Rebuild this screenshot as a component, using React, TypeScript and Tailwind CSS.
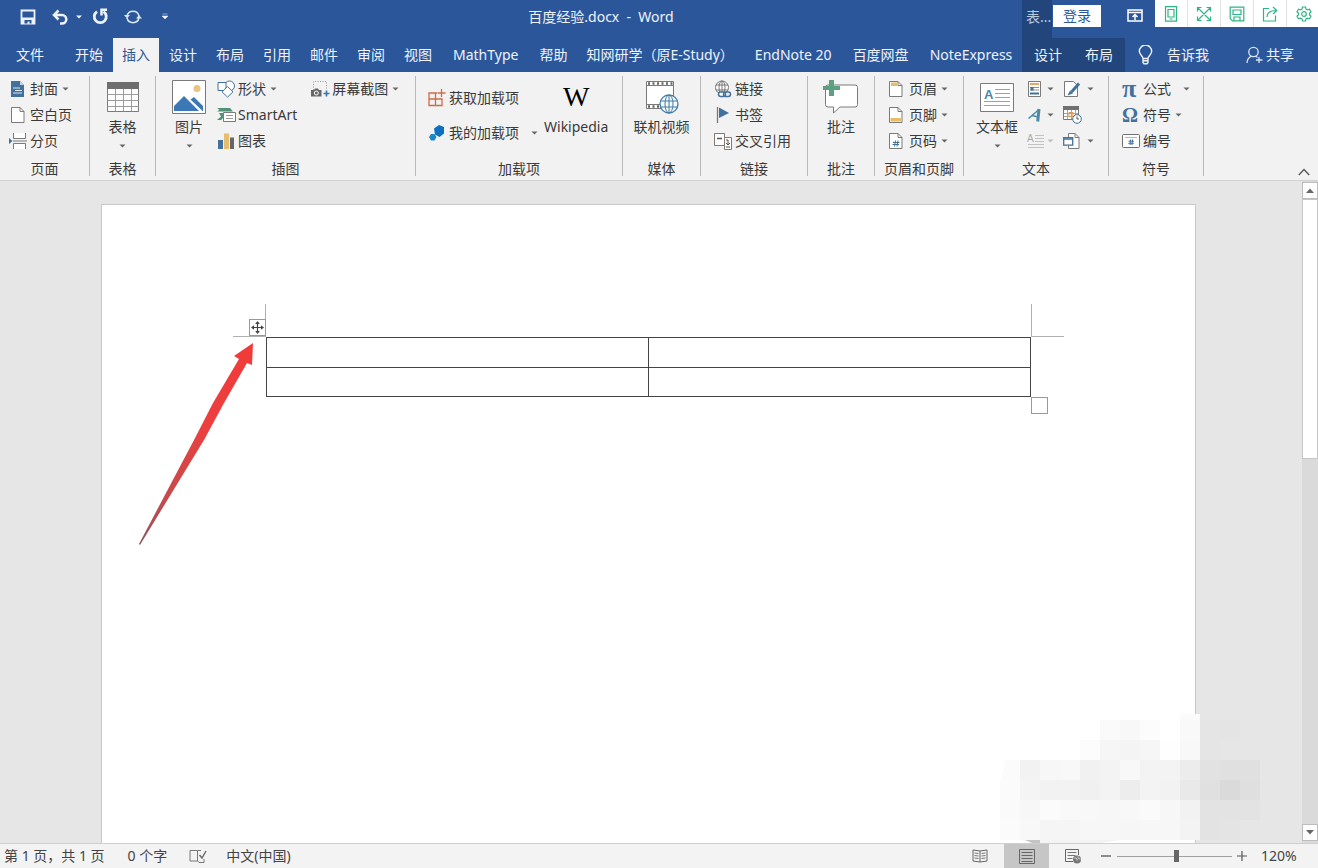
import React, { useState } from "react";

type IconProps = { w: number; h: number; children: React.ReactNode };

function Svg({ w, h, children }: IconProps) {
  return (
    <svg width={w} height={h} viewBox={`0 0 ${w} ${h}`} fill="none" className="shrink-0" aria-hidden="true">
      {children}
    </svg>
  );
}

const GRAY = "#7a7a7a";
const BLUE = "#41719c";

function Caret({ faded = false }: { faded?: boolean }) {
  return (
    <Svg w={7} h={4}>
      <path d="M0.5 0.5h6L3.5 3.5z" fill={faded ? "#bdbdbd" : "#666"} />
    </Svg>
  );
}

/* ---------- Title bar icons ---------- */

const SaveIcon = () => (
  <Svg w={16} h={16}>
    <path d="M1.500 1.500h13v13h-13z" stroke="#eef3fa" strokeWidth="1.800" />
    <path d="M2 8.500h12V14H2z" fill="#eef3fa" />
    <path d="M4.500 11h7v3.500H9.500V12.500h-2v2h-3z" fill="#2b579a" />
  </Svg>
);

const UndoIcon = () => (
  <Svg w={17} h={16}>
    <path d="M6.500 1.500L2 6l4.500 4.500M2.500 6h7.500a4.300 4.300 0 0 1 0 8.600H8" stroke="#eef3fa" strokeWidth="2.500" />
  </Svg>
);

const RedoIcon = () => (
  <Svg w={17} h={17}>
    <path d="M11.500 3.600A6 6 0 1 1 5 3.600" stroke="#eef3fa" strokeWidth="2.800" />
    <path d="M9.500 7.500V1.800H15" stroke="#eef3fa" strokeWidth="2.500" />
  </Svg>
);

const SyncIcon = () => (
  <Svg w={18} h={16}>
    <path d="M3 7A6.200 6.200 0 0 1 15 7M15 9A6.200 6.200 0 0 1 3 9" stroke="#dce6f4" strokeWidth="1.500" />
    <path d="M0 6h6L3 9.500zM12 9.500h6L15 6z" fill="#dce6f4" />
  </Svg>
);

const RibbonDisplayIcon = () => (
  <Svg w={16} h={13}>
    <path d="M1 1h14v11H1z" stroke="#fff" strokeWidth="1.500" />
    <path d="M1 3.500h14" stroke="#fff" strokeWidth="1.500" />
    <path d="M8 11V5.500M5.500 8L8 5.500 10.500 8" stroke="#fff" strokeWidth="1.500" />
  </Svg>
);

const green = { stroke: "#2fb583", strokeWidth: 1.2 };

const overlayTools = [
  {
    name: "预览",
    icon: (
      <Svg w={16} h={16}>
        <path d="M2.500 0.700h11v14.500h-11zM5 3.500h6v7.500H5zM6.500 13h3" {...green} />
      </Svg>
    ),
  },
  {
    name: "全屏",
    icon: (
      <Svg w={16} h={16}>
        <path d="M1.500 1.500l13 13M14.500 1.500l-13 13M1.500 5.500v-4h4M10.500 1.500h4v4M14.500 10.500v4h-4M5.500 14.500h-4v-4" {...green} />
      </Svg>
    ),
  },
  {
    name: "存储",
    icon: (
      <Svg w={16} h={16}>
        <path d="M1.200 1.200h13.600v13.600H3.500l-2.300-2.300zM4 4v4.500h8V4zM5 14.500v-3.500h6v3.500" {...green} />
      </Svg>
    ),
  },
  {
    name: "转发",
    icon: (
      <Svg w={16} h={16}>
        <path d="M7 2.500H1.500v12.500h12V9.500M5 11c0-4 3-6.500 9.500-6.500M11 1l3.800 3.500L11 8" {...green} />
      </Svg>
    ),
  },
  {
    name: "设置",
    icon: (
      <Svg w={16} h={16}>
        <path
          d="M6.500 1h3l.5 2 1.500.9 2-.7 1.500 2.600L13.500 7.200v1.600l1.500 1.400-1.500 2.600-2-.7-1.500.9-.5 2h-3L6 13l-1.500-.9-2 .7L1 10.200l1.500-1.400V7.200L1 5.800l1.500-2.600 2 .7L6 3z"
          {...green}
        />
        <circle cx="8" cy="8" r="2.300" {...green} />
      </Svg>
    ),
  },
];

const BulbIcon = () => (
  <Svg w={15} h={20}>
    <path
      d="M5 13.500c0-2.500-3.700-3.800-3.700-7.200a6.200 6.200 0 0 1 12.400 0c0 3.400-3.700 4.700-3.700 7.200zM5 13.500v4l1 1.200h3l1-1.200v-4M5 15.800h5"
      stroke="#eef3fa"
      strokeWidth="1.400"
    />
  </Svg>
);

const ShareIcon = () => (
  <Svg w={17} h={18}>
    <circle cx="7.500" cy="6" r="4.700" stroke="#dce6f4" strokeWidth="1.300" />
    <path d="M1 17c.3-3.800 2-5.800 4.500-6.800M9.500 10.200l2 1.300M13 11v6M10 14h6.500" stroke="#dce6f4" strokeWidth="1.300" />
  </Svg>
);

/* ---------- Ribbon icons ---------- */

const CoverIcon = () => (
  <Svg w={18} h={18}>
    <path d="M2 1h9l4 4v12H2z" fill={BLUE} />
    <path d="M11 1v4h4" fill="#c5d6e6" />
    <path d="M4 8h7M6 10.500h7M4 13h9" stroke="#dfe9f2" />
  </Svg>
);

const BlankIcon = () => (
  <Svg w={18} h={18}>
    <path d="M2.500 1.500h8.500l4 4v11H2.500z" fill="#fff" stroke={GRAY} />
    <path d="M11 1.500v4h4" stroke={GRAY} />
  </Svg>
);

const BreakIcon = () => (
  <Svg w={18} h={18}>
    <path d="M4.500 1v5.500h12V1M4.500 17v-5.500h12V17" fill="#fff" stroke={GRAY} />
    <path d="M4 9h14" stroke={GRAY} />
    <path d="M0 6l3.500 3L0 12z" fill={BLUE} />
  </Svg>
);

const TableIcon = () => (
  <Svg w={32} h={30}>
    <path d="M.5.500h31v29H.5z" fill="#fff" stroke={GRAY} />
    <path d="M0 0h32v7H0z" fill="#6e6e6e" />
    <path d="M8.500 7v22.500M16.500 7v22.500M24.500 7v22.500M.5 12.500h31M.5 18.500h31M.5 24.500h31" stroke="#9c9c9c" />
  </Svg>
);

const PictureIcon = () => (
  <Svg w={34} h={34}>
    <path d="M.5.500h33v33H.5z" fill="#fff" stroke={GRAY} />
    <circle cx="25" cy="8.500" r="3.500" fill="#eac282" />
    <path d="M2 31V26L12 16l15 15zM18 20l4-3 9 9v5h-1z" fill="#3b78b5" />
    <path d="M18 20l11.500 11" stroke="#fff" strokeWidth="1.500" />
  </Svg>
);

const ShapesIcon = () => (
  <Svg w={19} h={18}>
    <circle cx="12.500" cy="6" r="5" fill="#fff" stroke={BLUE} />
    <path d="M1 2.500h8v8H1z" fill="#fff" stroke={BLUE} />
    <path d="M10.500 6.500l5.500 5.300-5.500 5.300L5 11.800z" fill="#fff" stroke={BLUE} />
  </Svg>
);

const SmartArtIcon = () => (
  <Svg w={19} h={18}>
    <path d="M0 2h13l3 3.500H0l2.500-1.800zM2 7h5v4l-3 3H0l4-3.500z" fill="#4f9276" />
    <path d="M6.500 6.500h12v9h-12z" fill="#fff" stroke={GRAY} />
    <path d="M9 9.500h7M9 12.500h7" stroke="#9a9a9a" />
  </Svg>
);

const ChartIcon = () => (
  <Svg w={19} h={18}>
    <path d="M1 8h5v9H1z" fill={BLUE} />
    <path d="M7 1.500h5V17H7z" fill="#e6bc6d" />
    <path d="M13 5.500h4V17h-4z" fill="#666" />
  </Svg>
);

const ScreenshotIcon = () => (
  <Svg w={19} h={18}>
    <path d="M2.500 10V1.500h13V10" stroke="#999" strokeDasharray="1 1.500" />
    <path d="M0 10h3l1-1.500h3L8 10h2.500v6.500H0z" fill="#666" />
    <circle cx="5.300" cy="13" r="2" fill="#666" stroke="#fff" />
    <path d="M15.500 10.500v6M12.500 13.500h6" stroke="#3b78b5" strokeWidth="1.700" />
  </Svg>
);

const AddinsIcon = () => (
  <Svg w={18} h={18}>
    <path d="M9 4H1v12.500h13V10H1M7.500 4v12.500" stroke="#cf6b45" strokeWidth="1.300" />
    <path d="M13.500 0v8M9.500 4h8" stroke="#cf6b45" strokeWidth="1.300" />
  </Svg>
);

const MyAddinsIcon = () => (
  <Svg w={18} h={18}>
    <path d="M6 4.500l5-3.500 5 2v6.500L11.500 13 7 10.500z" fill="#0e70c0" />
    <path d="M3 10h3.500l2 3-2 3.500H3L1 13z" fill="#1b87c9" />
  </Svg>
);

const VideoIcon = () => (
  <Svg w={34} h={34}>
    <path d="M1.500 1.500h27v27h-27z" fill="#fff" stroke={GRAY} />
    <path d="M2 5.500h26M2 24.500h26" stroke={GRAY} />
    <path d="M3 3.500h25M3 26.500h25" stroke="#666" strokeWidth="2.500" strokeDasharray="2 2.500" />
    <circle cx="24" cy="24" r="9" fill="#f5f9fc" stroke="#427ca6" strokeWidth="1.300" />
    <ellipse cx="24" cy="24" rx="4" ry="9" stroke="#427ca6" />
    <path d="M24 15v18M15.500 21h17M15.500 27h17" stroke="#427ca6" />
  </Svg>
);

const LinkIcon = () => (
  <Svg w={18} h={18}>
    <circle cx="8" cy="7.500" r="6.500" fill="#fff" stroke="#777" />
    <path d="M8 1v13M2 5h12M2 10h12" stroke="#777" />
    <ellipse cx="8" cy="7.500" rx="3" ry="6.500" stroke="#777" />
    <rect x="4.500" y="12" width="7" height="4.500" rx="2.200" fill="#fff" stroke={BLUE} strokeWidth="1.500" />
    <rect x="9.500" y="12" width="7" height="4.500" rx="2.200" stroke={BLUE} strokeWidth="1.500" />
  </Svg>
);

const BookmarkIcon = () => (
  <Svg w={18} h={18}>
    <path d="M3.500 1v16" stroke="#777" strokeWidth="1.300" />
    <path d="M5 1.500L15 7 5 12z" fill={BLUE} />
  </Svg>
);

const CrossRefIcon = () => (
  <Svg w={19} h={18}>
    <path d="M.5 1.500h10v12H.5z" fill="#fff" stroke="#8a7868" />
    <path d="M3 6.500h5" stroke="#555" strokeWidth="1.500" />
    <path d="M10.500 5.500h7v12h-7z" fill="#fff" stroke="#8a7868" />
    <path d="M12 15h4M14 8v5M12 11l2 2 2-2M12 8h2" stroke="#555" />
  </Svg>
);

const CommentIcon = () => (
  <Svg w={36} h={34}>
    <path
      d="M5 5h27a2.500 2.500 0 0 1 2.500 2.500v17A2.500 2.500 0 0 1 32 27H17l-6.500 6v-6H5a2.500 2.500 0 0 1-2.500-2.500v-17A2.500 2.500 0 0 1 5 5z"
      fill="#fff"
      stroke={GRAY}
    />
    <path d="M6 0h5v6h6v4h-6v6H6v-6H0V6h6z" fill="#5c9f83" />
  </Svg>
);

function PageIcon({ kind }: { kind: "header" | "footer" | "number" }) {
  return (
    <Svg w={16} h={18}>
      <path d="M1.500 1.500H10l4 4v11H1.500z" fill="#fff" stroke={GRAY} />
      <path d="M10 1.500v4h4" stroke={GRAY} />
      {kind === "header" && <path d="M3 2.500h6v3.500H3z" fill="#e6bc6d" />}
      {kind === "footer" && <path d="M2.500 12h11v3.500h-11z" fill="#e6bc6d" />}
      {kind === "number" && <path d="M7.500 8.500L6.500 14.500M10 8.500L9 14.500M5 10.500h6.500M4.500 12.500H11" stroke={BLUE} />}
    </Svg>
  );
}

const TextBoxIcon = () => (
  <Svg w={34} h={29}>
    <path d="M.5.500h33v28H.5z" fill="#fff" stroke={GRAY} />
    <text x="4" y="16" fontSize="13" fontWeight="700" fontFamily="Liberation Sans, sans-serif" fill="#4a86a8">
      A
    </text>
    <path d="M15 6.500h15M15 10.500h15M15 14.500h15M4 18.500h26M4 22.500h26" stroke="#a0a0a0" />
  </Svg>
);

const QuickPartsIcon = () => (
  <Svg w={16} h={18}>
    <path d="M1.500 1.500h12v15h-12z" fill="#fff" stroke={GRAY} />
    <path d="M3 3h9v2H3z" fill="#e8a868" />
    <path d="M3 7.500h9M3 10h9" stroke="#909090" />
    <path d="M3.500 7h3v3.500h-3zM3 12.500h9v2H3z" fill={BLUE} />
  </Svg>
);

const WordArtIcon = () => (
  <Svg w={16} h={18}>
    <path d="M1.500 12.500L12 3.500" stroke="#4d8aa8" strokeWidth="1.600" />
    <path d="M12 3l-1.300 12.500" stroke="#4d8aa8" strokeWidth="3" />
    <path d="M5 9.500l6 1.500" stroke="#4d8aa8" strokeWidth="1.600" />
  </Svg>
);

const DropCapIcon = () => (
  <Svg w={18} h={18}>
    <text x="0" y="10" fontSize="10" fontFamily="Liberation Sans, sans-serif" fill="#aaa">
      A
    </text>
    <path d="M8 3.500h9M8 6.500h9M8 9.500h9M1 12.500h16M1 15.500h16" stroke="#c2c2c2" />
  </Svg>
);

const SignatureIcon = () => (
  <Svg w={18} h={18}>
    <path d="M1.500 1.500h9l4 4v11h-13z" fill="#fff" stroke={GRAY} />
    <path d="M16 3.500L8.500 12" stroke={BLUE} strokeWidth="3" />
    <path d="M7 10.500L4.500 15.500 10 13.500z" fill={BLUE} />
  </Svg>
);

const DateIcon = () => (
  <Svg w={19} h={18}>
    <path d="M.5.500h15v13H.5z" fill="#fff" stroke="#857567" />
    <path d="M0 0h16v4H0z" fill="#707070" />
    <path d="M4.500 4v9M8.500 4v9M12.500 4v9M1 7.500h14M1 10.500h14" stroke="#b3a291" />
    <path d="M6 6.500h4v4H6z" stroke="#e0954e" />
    <circle cx="14" cy="13" r="4.300" fill="#fff" stroke={BLUE} />
    <path d="M14 10.500V13h2" stroke="#555" />
  </Svg>
);

const ObjectIcon = () => (
  <Svg w={18} h={18}>
    <path d="M5.500 5V1.500H12l4 4v11H5.500V13" fill="#fff" stroke={GRAY} />
    <path d="M12 1.500v4h4" stroke={GRAY} />
    <path d="M.7 5.700h9v7.500h-9z" fill="#fff" stroke={BLUE} strokeWidth="1.300" />
    <path d="M.7 7h9" stroke={BLUE} strokeWidth="1.500" />
  </Svg>
);

const NumberIcon = () => (
  <Svg w={18} h={16}>
    <rect x=".5" y="1.500" width="17" height="13" rx="1" fill="#fff" stroke="#6f6f6f" />
    <path d="M3 4.500h12" stroke="#b5b5b5" />
    <path d="M8.500 6.500L8 12M10.500 6.500L10 12M6.500 8.200H12M6.300 10.300h5.500" stroke={BLUE} />
  </Svg>
);

/* ---------- Ribbon building blocks ---------- */

function Group({ label, width, children }: { label: string; width: string; children: React.ReactNode }) {
  return (
    <section aria-label={label} className={`flex shrink-0 flex-col border-r border-[#b9b9b9] ${width}`}>
      <div className="flex h-[78px] shrink-0">{children}</div>
      <div className="mt-2 text-center leading-[14px]">{label}</div>
    </section>
  );
}

function Row({ icon, text, caret = false, wide = false }: { icon: React.ReactNode; text: string; caret?: boolean; wide?: boolean }) {
  return (
    <button type="button" className="flex h-[26px] items-center whitespace-nowrap">
      <span className="flex w-[21px] shrink-0">{icon}</span>
      <span>{text}</span>
      {caret && (
        <span className={wide ? "ml-3" : "ml-1"}>
          <Caret />
        </span>
      )}
    </button>
  );
}

function BigButton({ icon, text, caret = false }: { icon: React.ReactNode; text: string; caret?: boolean }) {
  return (
    <button type="button" className="flex h-full flex-col items-center whitespace-nowrap">
      <span className="flex h-[42px] items-center justify-center">{icon}</span>
      <span className="leading-[18px]">{text}</span>
      {caret && (
        <span className="mt-2">
          <Caret />
        </span>
      )}
    </button>
  );
}

function MiniButton({
  label,
  icon,
  caret = true,
  faded = false,
  wide = false,
}: {
  label: string;
  icon: React.ReactNode;
  caret?: boolean;
  faded?: boolean;
  wide?: boolean;
}) {
  return (
    <button type="button" aria-label={label} className="flex h-[26px] items-center">
      <span className={`flex shrink-0 ${wide ? "w-6" : "w-5"}`}>{icon}</span>
      {caret && <Caret faded={faded} />}
    </button>
  );
}

function Ribbon() {
  return (
    <div className="flex h-[109px] shrink-0 border-b border-[#d2d2d2] bg-[#f2f2f2] pt-1 pb-1 text-[#3a3a3a]">
      <Group label="页面" width="w-[90px]">
        <div className="flex flex-col pl-[9px]">
          <Row icon={<CoverIcon />} text="封面" caret />
          <Row icon={<BlankIcon />} text="空白页" />
          <Row icon={<BreakIcon />} text="分页" />
        </div>
      </Group>
      <Group label="表格" width="w-[66px]">
        <div className="flex flex-1 justify-center">
          <BigButton icon={<TableIcon />} text="表格" caret />
        </div>
      </Group>
      <Group label="插图" width="w-[260px]">
        <div className="flex pl-4">
          <BigButton icon={<PictureIcon />} text="图片" caret />
          <div className="ml-[11px] flex flex-col">
            <Row icon={<ShapesIcon />} text="形状" caret />
            <Row icon={<SmartArtIcon />} text="SmartArt" />
            <Row icon={<ChartIcon />} text="图表" />
          </div>
          <div className="ml-[14px] flex flex-col">
            <Row icon={<ScreenshotIcon />} text="屏幕截图" caret />
          </div>
        </div>
      </Group>
      <Group label="加载项" width="w-[207px]">
        <div className="flex gap-[6px] pl-3">
          <div className="flex flex-col gap-[9px] pt-[9px]">
            <Row icon={<AddinsIcon />} text="获取加载项" />
            <Row icon={<MyAddinsIcon />} text="我的加载项" caret wide />
          </div>
          <BigButton icon={<span className="font-['Liberation_Serif',serif] text-[28px] text-black">W</span>} text="Wikipedia" />
        </div>
      </Group>
      <Group label="媒体" width="w-[78px]">
        <div className="flex flex-1 justify-center">
          <BigButton icon={<VideoIcon />} text="联机视频" />
        </div>
      </Group>
      <Group label="链接" width="w-[107px]">
        <div className="flex flex-col pl-[13px]">
          <Row icon={<LinkIcon />} text="链接" />
          <Row icon={<BookmarkIcon />} text="书签" />
          <Row icon={<CrossRefIcon />} text="交叉引用" />
        </div>
      </Group>
      <Group label="批注" width="w-[67px]">
        <div className="flex flex-1 justify-center">
          <BigButton icon={<CommentIcon />} text="批注" />
        </div>
      </Group>
      <Group label="页眉和页脚" width="w-[89px]">
        <div className="flex flex-col pl-[13px]">
          <Row icon={<PageIcon kind="header" />} text="页眉" caret />
          <Row icon={<PageIcon kind="footer" />} text="页脚" caret />
          <Row icon={<PageIcon kind="number" />} text="页码" caret />
        </div>
      </Group>
      <Group label="文本" width="w-[145px]">
        <div className="flex gap-[9px] pl-3">
          <BigButton icon={<TextBoxIcon />} text="文本框" caret />
          <div className="flex flex-col">
            <MiniButton label="文档部件" icon={<QuickPartsIcon />} />
            <MiniButton label="艺术字" icon={<WordArtIcon />} />
            <MiniButton label="首字下沉" icon={<DropCapIcon />} faded />
          </div>
          <div className="flex flex-col">
            <MiniButton label="签名行" icon={<SignatureIcon />} wide />
            <MiniButton label="日期和时间" icon={<DateIcon />} caret={false} wide />
            <MiniButton label="对象" icon={<ObjectIcon />} wide />
          </div>
        </div>
      </Group>
      <Group label="符号" width="w-[95px]">
        <div className="flex flex-col pl-[13px]">
          <Row icon={<span className="font-['Liberation_Serif',serif] text-[26px] leading-[20px] font-bold text-[#41719c]">π</span>} text="公式" caret wide />
          <Row icon={<span className="font-['Liberation_Serif',serif] text-[20px] leading-[20px] font-bold text-[#41719c]">Ω</span>} text="符号" caret />
          <Row icon={<NumberIcon />} text="编号" />
        </div>
      </Group>
      <button type="button" aria-label="折叠功能区" className="ml-auto self-end pr-2">
        <Svg w={12} h={8}>
          <path d="M.8 7L6 1.500 11.200 7" stroke="#555" strokeWidth="1.300" />
        </Svg>
      </button>
    </div>
  );
}

/* ---------- Header ---------- */

const tabs = [
  { name: "设计" },
  { name: "布局" },
  { name: "引用" },
  { name: "邮件" },
  { name: "审阅" },
  { name: "视图" },
  { name: "MathType", addin: true },
  { name: "帮助" },
  { name: "知网研学（原E-Study）" },
  { name: "EndNote 20", addin: true },
  { name: "百度网盘" },
  { name: "NoteExpress", addin: true },
];

function Header() {
  return (
    <header className="shrink-0 bg-[#2b579a] text-[#eef3fa]">
      <div className="flex h-[38px] items-start">
        <div className="flex h-[33px] w-[180px] shrink-0 items-center pl-5">
          <button type="button" aria-label="保存"><SaveIcon /></button>
          <button type="button" aria-label="撤消" className="ml-4 flex items-center gap-[7px]">
            <UndoIcon />
            <Svg w={6} h={4}><path d="M0 .500h6L3 3.500z" fill="#eef3fa" /></Svg>
          </button>
          <button type="button" aria-label="重复" className="ml-[10px]"><RedoIcon /></button>
          <button type="button" aria-label="同步" className="ml-[15px]"><SyncIcon /></button>
          <button type="button" aria-label="自定义快速访问工具栏" className="ml-5">
            <Svg w={6} h={7}><path d="M.5 1h5M0 3h6L3 6z" stroke="#eef3fa" strokeWidth=".5" fill="#eef3fa" /></Svg>
          </button>
        </div>
        <h1 className="flex h-[33px] flex-1 items-center justify-center whitespace-pre">百度经验.docx  -  Word</h1>
        <div className="flex h-full w-[296px] shrink-0 items-start">
          <div className="flex h-full w-[30px] items-start bg-[#22467c] pt-2 pl-1 text-[#b9c9e0]">
            <span className="leading-[18px]">表...</span>
          </div>
          <button type="button" className="mt-[5px] ml-px h-[22px] w-12 bg-white leading-[22px] text-[#2b579a]">登录</button>
          <button type="button" aria-label="功能区显示选项" className="mt-[9px] ml-[26px]"><RibbonDisplayIcon /></button>
          <div className="ml-auto flex h-[27px] w-[163px] divide-x divide-[#e3e3e3] overflow-hidden bg-white">
            {overlayTools.map((tool) => (
              <button key={tool.name} type="button" aria-label={tool.name} className="flex w-[33px] shrink-0 items-center justify-center">
                {tool.icon}
              </button>
            ))}
          </div>
        </div>
      </div>
      <div className="flex h-[34px]">
        <nav aria-label="功能区选项卡" className="flex min-w-0 flex-1 gap-px overflow-hidden">
          <button type="button" className="mr-[5px] px-4 whitespace-nowrap">文件</button>
          <button type="button" className="px-[9px] whitespace-nowrap">开始</button>
          <button type="button" aria-current="page" className="bg-[#f2f2f2] px-[9px] whitespace-nowrap text-[#2b579a]">插入</button>
          {tabs.map((tab) => (
            <button key={tab.name} type="button" className={`whitespace-nowrap ${tab.addin ? "px-[11px]" : "px-[9px]"}`}>
              {tab.name}
            </button>
          ))}
        </nav>
        <div className="flex w-[296px] shrink-0">
          <div className="flex w-[103px] items-center justify-between bg-[#22467c] px-3">
            <button type="button">设计</button>
            <button type="button">布局</button>
          </div>
          <button type="button" className="ml-[13px] flex items-center gap-[14px]"><BulbIcon />告诉我</button>
          <button type="button" className="mr-6 ml-auto flex items-center gap-[3px]"><ShareIcon />共享</button>
        </div>
      </div>
    </header>
  );
}

/* ---------- Document ---------- */

/* Rows of 20px blocks; null leaves a block clear. */
const blocks: (string | null)[][] = [
  [null, null, null, null, null, "#fafafa", "#f8f8f8", "#fcfcfc", null, "#f9f9f9", "#e5e5e5", "#e4e4e4", null],
  [null, null, null, null, "#fcfcfc", "#f6f6f6", "#f4f4f4", "#f6f6f6", "#fefefe", "#f8f8f8", "#e5e5e5", null, null],
  [null, "#f2f2f2", "#f7f7f7", "#f8f8f8", "#f1f1f1", "#f3f3f3", "#f8f8f8", "#f3f3f3", "#f3f3f3", "#ececec", "#e2e2e2", "#e0e0e0", "#e0e0e0"],
  ["#fbfbfb", "#f4f4f4", "#f2f2f2", "#f2f2f2", "#f0f0f0", "#f3f3f3", "#ededed", "#f3f3f3", "#f2f2f2", "#e9e9e9", "#e0e0e0", "#dadada", "#dfdfdf"],
  ["#fafafa", "#f7f7f7", "#fbfbfb", "#f9f9f9", "#f8f8f8", "#f7f7f7", "#f8f8f8", "#fafafa", "#f7f7f7", "#f2f2f2", "#e3e3e3", "#e3e3e3", "#e3e3e3"],
  ["#fbfbfb", "#f8f8f8", "#f5f5f5", "#f5f5f5", "#f7f7f7", "#f7f7f7", "#f6f6f6", "#f7f7f7", "#f7f7f7", "#f3f3f3", "#e3e3e3", "#e4e4e4", null],
];

function Mosaic() {
  return (
    <svg width="260" height="129" viewBox="0 0 260 129" className="absolute right-[42px] bottom-0" aria-hidden="true">
      <path d="M180 0h20v6h-20z" fill="#fbfbfb" />
      <path d="M5 46h15v20H1z" fill="#fbfbfb" />
      {blocks.map((row, r) =>
        row.map((fill, c) => fill && <rect key={`${r}-${c}`} x={c * 20} y={6 + r * 20} width="20" height="20" fill={fill} />),
      )}
      <path d="M20 126h100l-20 3H40z" fill="#f3f3f3" />
      <path d="M25 126h15v3h-8z" fill="#c4c4c4" />
    </svg>
  );
}

function DocumentTable() {
  const cell = "h-[29px] w-1/2 border border-[#444] p-0";
  return (
    <div className="relative">
      <table aria-label="表格" className="h-[60px] w-full table-fixed border-collapse">
        <tbody>
          <tr><td className={cell} /><td className={cell} /></tr>
          <tr><td className={cell} /><td className={cell} /></tr>
        </tbody>
      </table>
      <div className="absolute -top-[33px] -left-[33px] size-[33px] border-r border-b border-[#b0b0b0]" />
      <div className="absolute -top-[33px] -right-[33px] size-[33px] border-b border-l border-[#b0b0b0]" />
      <button type="button" aria-label="移动表格" className="absolute -top-[18px] -left-[17px] flex size-[17px] items-center justify-center border border-[#999] bg-white">
        <Svg w={13} h={13}>
          <path d="M6.500 1v11M1 6.500h11" stroke="#444" strokeWidth="1.200" />
          <path d="M6.500 0l2.300 3H4.200zM6.500 13l2.300-3H4.200zM0 6.500l3-2.300v4.600zM13 6.500l-3-2.300v4.600z" fill="#444" />
        </Svg>
      </button>
      <div className="absolute -right-[17px] -bottom-[17px] size-[17px] border border-[#999] bg-white" />
      <svg width="116" height="204" viewBox="0 0 116 204" className="absolute top-[6px] -left-[128px]" aria-hidden="true">
        <defs>
          <linearGradient id="arrow" x1="0" y1="204" x2="116" y2="0" gradientUnits="userSpaceOnUse">
            <stop offset="0" stopColor="#8d5560" />
            <stop offset=".25" stopColor="#c84a4b" />
            <stop offset=".6" stopColor="#ec3f3e" />
            <stop offset="1" stopColor="#f23a3a" />
          </linearGradient>
        </defs>
        <path d="M115 0L96 13l5 3-26 44-19 37L1 201l1 1L66 97l20-37 23-40 5 2z" fill="url(#arrow)" />
      </svg>
    </div>
  );
}

function Workspace() {
  return (
    <div className="flex min-h-0 flex-1 bg-[#e6e6e6]">
      <main className="relative flex flex-1 pt-[23px] pr-[106px] pl-[101px]">
        <div className="flex-1 border border-b-0 border-[#c9c9c9] bg-white px-[164px] pt-[132px]">
          <DocumentTable />
        </div>
        <Mosaic />
      </main>
      <div className="flex w-4 shrink-0 flex-col bg-[#dadada] pt-px pb-[2px]">
        <button type="button" aria-label="向上滚动" className="flex h-[17px] shrink-0 items-center justify-center border border-[#bdbdbd] bg-white">
          <Svg w={8} h={5}><path d="M0 5h8L4 .500z" fill="#666" /></Svg>
        </button>
        <div className="h-[260px] border border-[#c6c6c6] bg-white" />
        <button type="button" aria-label="向下滚动" className="mt-auto flex h-[17px] shrink-0 items-center justify-center border border-[#bdbdbd] bg-white">
          <Svg w={8} h={5}><path d="M0 0h8L4 4.500z" fill="#666" /></Svg>
        </button>
      </div>
    </div>
  );
}

/* ---------- Status bar ---------- */

function StatusBar() {
  const [zoom, setZoom] = useState(52);
  return (
    <footer className="flex h-[25px] shrink-0 items-center border-t border-[#cfcfcf] bg-[#f3f3f3] text-[#444]">
      <span className="pl-1">第 1 页，共 1 页</span>
      <span className="ml-[23px]">0 个字</span>
      <button type="button" aria-label="校对" className="ml-[22px]">
        <Svg w={18} h={14}>
          <path d="M8.500 1.500V12M8.500 1.500H1V12h7.500l1.500 1.500h5V10M8.500 1.500H12" stroke="#777" />
          <path d="M10.500 6l2.500 3 4-7" stroke="#666" strokeWidth="1.400" />
        </Svg>
      </button>
      <span className="ml-[19px]">中文(中国)</span>
      <div className="ml-auto flex h-full items-center">
        <button type="button" aria-label="阅读视图" className="mr-4">
          <Svg w={16} h={14}>
            <path d="M8 2L1 1v11l7 1 7-1V1zM8 2v11" stroke="#666" />
            <path d="M2.500 4l4 .5M2.500 6.500l4 .5M2.500 9l4 .5M13.500 4l-4 .5M13.500 6.500l-4 .5M13.500 9l-4 .5" stroke="#777" />
          </Svg>
        </button>
        <button type="button" aria-label="页面视图" aria-pressed="true" className="flex h-full w-[45px] items-center justify-center bg-[#c6c6c6]">
          <Svg w={16} h={15}>
            <path d="M.5.500h15v14H.5z" stroke="#666" />
            <path d="M2.500 3.500h11M2.500 6.500h11M2.500 9.500h11M2.500 12.500h11" stroke="#666" />
          </Svg>
        </button>
        <button type="button" aria-label="Web 版式视图" className="ml-4">
          <Svg w={17} h={15}>
            <path d="M13.500 6V.500H.5v12H8" stroke="#666" />
            <path d="M2.500 3.500h9M2.500 6.500h8M2.500 9.500h5" stroke="#777" />
            <circle cx="12" cy="10.500" r="4" fill="#777" />
            <path d="M9.500 9c2-.5 3 1 2.500 2.500M13 7.500c0 2 1 2.500 2.500 2.500" stroke="#e8e8e8" />
          </Svg>
        </button>
        <button type="button" aria-label="缩小" className="ml-[18px]">
          <Svg w={12} h={12}><path d="M1 6h10" stroke="#555" strokeWidth="1.300" /></Svg>
        </button>
        <input
          type="range"
          aria-label="显示比例"
          min={0}
          max={100}
          value={zoom}
          onChange={(e) => setZoom(Number(e.target.value))}
          className="mx-[5px] h-3 w-[115px] appearance-none bg-transparent [&::-webkit-slider-runnable-track]:h-px [&::-webkit-slider-runnable-track]:bg-[#a0a0a0] [&::-webkit-slider-thumb]:-mt-[6px] [&::-webkit-slider-thumb]:h-3 [&::-webkit-slider-thumb]:w-[5px] [&::-webkit-slider-thumb]:appearance-none [&::-webkit-slider-thumb]:bg-[#666]"
        />
        <button type="button" aria-label="放大">
          <Svg w={10} h={10}><path d="M0 5h10M5 0v10" stroke="#555" strokeWidth="1.200" /></Svg>
        </button>
        <span className="w-[71px] pl-[14px]">120%</span>
      </div>
    </footer>
  );
}

export default function App() {
  return (
    <div className="flex h-screen flex-col overflow-hidden font-['Noto_Sans','Noto_Sans_CJK_SC',sans-serif] text-[14px] leading-[20px]">
      <Header />
      <Ribbon />
      <Workspace />
      <StatusBar />
    </div>
  );
}
